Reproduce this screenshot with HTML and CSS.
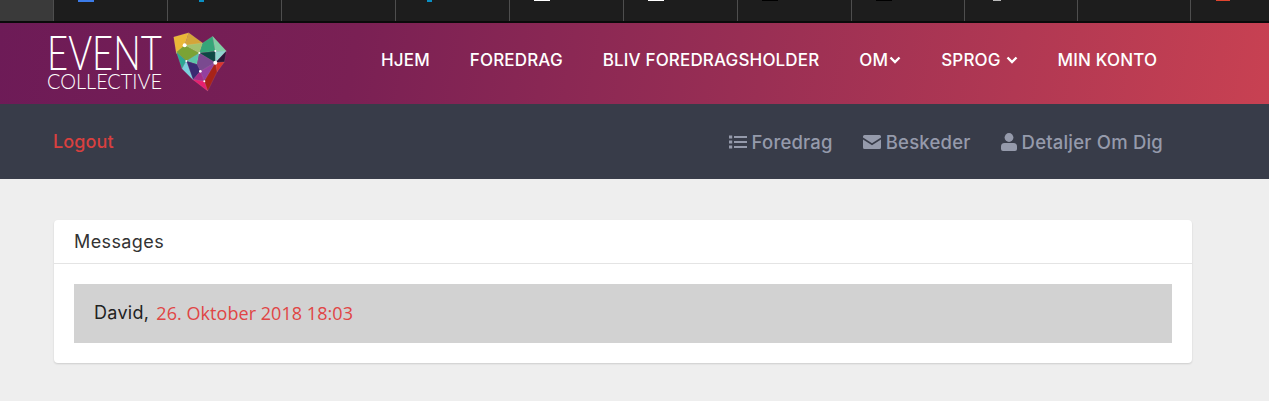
FILE: index.html
```html
<!DOCTYPE html>
<html lang="da">
<head>
<meta charset="utf-8">
<title>Event Collective</title>
<link rel="stylesheet" href="styles.css">
</head>
<body>
<div class="tabs">
  <div class="tab tab-first"></div>
  <div class="tab"><i class="fav fav-blue"></i></div>
  <div class="tab"><i class="fav fav-cyan"></i></div>
  <div class="tab"></div>
  <div class="tab"><i class="fav fav-cyan"></i></div>
  <div class="tab"><i class="fav fav-white"></i></div>
  <div class="tab"><i class="fav fav-white"></i></div>
  <div class="tab"><i class="fav fav-black"></i></div>
  <div class="tab tab-narrow"><i class="fav fav-black"></i></div>
  <div class="tab tab-narrow"><i class="fav fav-grey"></i></div>
  <div class="tab tab-narrow"></div>
  <div class="tab tab-last"><i class="fav fav-red"></i></div>
</div>
<header class="topbar">
  <a class="logo" href="#">
    <span class="logo-text"><span class="logo-event">EVENT</span><span class="logo-coll">COLLECTIVE</span></span>
    <svg class="logo-mark" width="54" height="60" viewBox="518 95 162 180">
      <g stroke="#ffffff" stroke-opacity=".25" stroke-width="1">
        <polygon points="520,110 565,97 553,135 528,160" fill="#eab838"/>
        <polygon points="565,97 607,128 597,158 553,135" fill="#d4a53a"/>
        <polygon points="553,135 597,158 607,128" fill="#a3c26e"/>
        <polygon points="553,135 597,158 558,182 528,155" fill="#7ba335"/>
        <polygon points="607,128 637,108 645,153 597,158" fill="#35a578"/>
        <polygon points="637,108 678,152 645,153" fill="#7fcfa4"/>
        <polygon points="597,158 645,153 645,187" fill="#0e4745"/>
        <polygon points="645,153 678,152 645,187" fill="#8fd5cf"/>
        <polygon points="678,152 672,185 645,187" fill="#2b1638"/>
        <polygon points="528,155 558,182 545,205" fill="#2aa893"/>
        <polygon points="558,182 597,158 590,192" fill="#5cc6a8"/>
        <polygon points="597,158 645,187 600,213 590,192" fill="#7a4a90"/>
        <polygon points="558,182 590,192 600,213 578,238" fill="#3a2a72"/>
        <polygon points="545,205 558,182 578,238" fill="#7bd1de"/>
        <polygon points="600,213 645,187 612,243" fill="#933f9e"/>
        <polygon points="645,187 672,185 650,215" fill="#d8352e"/>
        <polygon points="645,187 650,215 622,272 612,243" fill="#a82318"/>
        <polygon points="578,238 600,213 612,243" fill="#a62c88"/>
        <polygon points="578,238 612,243 622,272" fill="#e81f6e"/>
      </g>
      <g fill="#fff">
        <circle cx="553" cy="135" r="6"/><circle cx="597" cy="158" r="3"/><circle cx="645" cy="152" r="3"/><circle cx="645" cy="187" r="6"/><circle cx="558" cy="182" r="3"/><circle cx="600" cy="213" r="4"/><circle cx="612" cy="243" r="3"/>
      </g>
    </svg>
  </a>
  <nav class="mainnav">
    <a href="#">HJEM</a>
    <a href="#">FOREDRAG</a>
    <a href="#">BLIV FOREDRAGSHOLDER</a>
    <a href="#">OM<svg class="chev chev-tight" viewBox="0 0 12 8"><path d="M1.500 1.500 6 6l4.500-4.500" fill="none" stroke="#fff" stroke-width="2.400"/></svg></a>
    <a href="#">SPROG<svg class="chev" viewBox="0 0 12 8"><path d="M1.500 1.500 6 6l4.500-4.500" fill="none" stroke="#fff" stroke-width="2.400"/></svg></a>
    <a href="#">MIN KONTO</a>
  </nav>
</header>
<div class="subbar">
  <a class="logout" href="#">Logout</a>
  <nav class="subnav">
    <a href="#"><svg class="ico" width="18" height="14" viewBox="0 0 18 14"><path fill="#959aab" d="M0 .6h3.200v2.800H0zM0 5.600h3.200v2.800H0zM0 10.600h3.200v2.800H0zM5 1h13v2H5zM5 6h13v2H5zM5 11h13v2H5z"/></svg>Foredrag</a>
    <a href="#"><svg class="ico" width="18" height="14" viewBox="0 0 18 14"><path fill="#959aab" d="M1.500 0h15A1.500 1.500 0 0 1 18 1.500v.9L9 8.200 0 2.400v-.9A1.500 1.500 0 0 1 1.500 0zM0 4.400 9 10.200l9-5.800v8.100a1.500 1.500 0 0 1-1.500 1.500h-15A1.500 1.500 0 0 1 0 12.500z"/></svg>Beskeder</a>
    <a href="#"><svg class="ico" width="16" height="18" viewBox="0 0 16 18"><circle cx="8" cy="4.500" r="4.400" fill="#959aab"/><path fill="#959aab" d="M3.500 10h9A3.500 3.500 0 0 1 16 13.500V16a2 2 0 0 1-2 2H2a2 2 0 0 1-2-2v-2.500A3.500 3.500 0 0 1 3.500 10z"/></svg>Detaljer Om Dig</a>
  </nav>
</div>
<main class="content">
  <section class="card">
    <h2 class="card-title">Messages</h2>
    <div class="card-body">
      <div class="message"><span class="sender">David,</span> <span class="date">26. Oktober 2018 18:03</span></div>
    </div>
  </section>
</main>
</body>
</html>
```
FILE: styles.css
```css
* { box-sizing: border-box; }
html, body { margin: 0; padding: 0; }
body { width: 1269px; height: 401px; overflow: hidden; background: #eeeeee; font-family: "Inter", "Liberation Sans", sans-serif; }
a { text-decoration: none; color: inherit; }

.tabs { display: flex; height: 23px; background: #1d1d1d; border-bottom: 2px solid #0a0a0a; }
.tab { width: 114px; flex: none; height: 21px; border-left: 1px solid #4e4e4e; }
.tab-first { width: 53px; background: #3a3a3a; border-left: 0; }
.tab-narrow { width: 113px; }
.tab-last { flex: 1; }
.fav { display: block; height: 1px; margin-left: 24px; width: 16px; }
.fav-blue { background: #3b7be8; height: 2px; }
.fav-cyan { background: #0a8fc4; width: 5px; margin-left: 31px; height: 2px; }
.fav-white { background: #fff; }
.fav-black { background: #000; }
.fav-grey { background: #bbb; width: 8px; margin-left: 28px; }
.fav-red { background: #e0452f; width: 14px; margin-left: 25px; }

.topbar { height: 81px; display: flex; align-items: center; background: linear-gradient(100deg, #6d1b57 0%, #7a2054 28%, #9a2f54 60%, #c84152 100%); }
.logo { display: flex; align-items: center; margin-left: 47px; color: #fff; width: 180px; flex: none; }
.logo-text { display: flex; flex-direction: column; width: 126px; flex: none; font-family: "Lato", sans-serif; font-weight: 300; margin-top: -3px; }
.logo-event { display: block; font-size: 48px; line-height: 38px; width: 140px; transform: scaleX(.76); transform-origin: left center; white-space: nowrap; }
.logo-coll { display: block; font-size: 22px; line-height: 20px; width: 122px; transform: scaleX(.905); transform-origin: left center; white-space: nowrap; }
.logo-mark { flex: none; margin-top: -3px; }

.mainnav { display: flex; margin-left: 154px; padding-bottom: 7px; gap: 40px; color: #fff; font-size: 17px; font-weight: 500; letter-spacing: .15px; }
.mainnav a { display: flex; align-items: center; white-space: nowrap; }
.chev { width: 12px; height: 8px; margin-left: 5px; }
.chev-tight { margin-left: 1px; }

.subbar { height: 75px; display: flex; align-items: center; justify-content: space-between; background: #383c49; padding: 0 106px 0 53px; }
.logout { color: #d8403f; font-weight: 500; font-size: 18px; letter-spacing: .1px; }
.subnav { display: flex; gap: 30px; color: #959aab; font-weight: 500; font-size: 18.500px; letter-spacing: .2px; }
.subnav a { display: flex; align-items: center; gap: 5px; white-space: nowrap; }

.content { padding: 41px 77px 0 54px; }
.card { height: 143px; background: #fff; border-radius: 4px; box-shadow: 0 1px 2px rgba(0,0,0,.14); }
.card-title { height: 44px; margin: 0; padding: 0 20px; display: flex; align-items: center; font-size: 18px; font-weight: 400; letter-spacing: .4px; color: #333; border-bottom: 1px solid #e4e4e4; }
.card-body { padding: 20px; }
.message { height: 59px; background: #d2d2d2; display: flex; align-items: center; gap: 7px; padding: 0 20px 2px; font-size: 18px; }
.sender { color: #222; letter-spacing: .3px; }
.date { color: #e04545; font-family: "Open Sans", sans-serif; font-size: 18px; letter-spacing: .05px; }
```
